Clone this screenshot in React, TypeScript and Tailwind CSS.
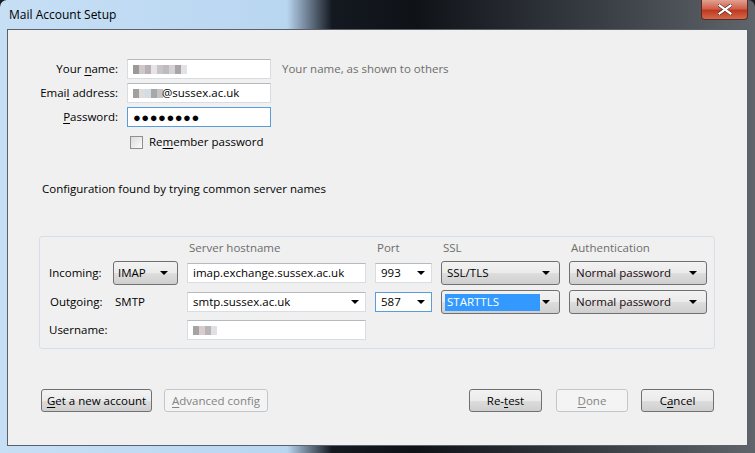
import React from "react";

const font = { fontFamily: '"Segoe UI", "Open Sans", "Noto Sans", sans-serif' };

const Arrow = () => (
  <svg width="8" height="4" viewBox="0 0 8 4" className="shrink-0">
    <path d="M0 0h8L4 4z" fill="#000" />
  </svg>
);

const Blur = ({ cells }: { cells: string[] }) => (
  <div className="flex h-[9px]">
    {cells.map((c, i) => (
      <div key={i} className="h-full w-[6px]" style={{ background: c }} />
    ))}
  </div>
);

const U = ({ children }: { children: React.ReactNode }) => <span className="underline underline-offset-2">{children}</span>;

const TextBox = ({ children, focus, w, combo }: { children?: React.ReactNode; focus?: boolean; w: string; combo?: boolean }) => (
  <div
    className={`flex h-[20px] items-center bg-white pl-[5px] pr-[6px] ${w} border ${
      focus ? "border-[#5a9ddb]" : "border-[#d9dde3] border-t-[#b5b9c0]"
    }`}
  >
    <div className="flex flex-1 items-center">{children}</div>
    {combo && <Arrow />}
  </div>
);

const Select = ({ children, w }: { children: React.ReactNode; w: string }) => (
  <div
    className={`flex h-[24px] items-center justify-between rounded-[3px] border border-[#707070] bg-[linear-gradient(#f2f2f2_0%,#ebebeb_50%,#dddddd_51%,#cfcfcf_100%)] pl-[3px] pr-[9px] ${w}`}
  >
    {children}
    <Arrow />
  </div>
);

const Button = ({ children, w, disabled }: { children: React.ReactNode; w: string; disabled?: boolean }) => (
  <div
    className={`flex h-[23px] items-center justify-center rounded-[3px] border ${w} ${
      disabled
        ? "border-[#c3c7ca] bg-[#f4f4f4] text-[#838383]"
        : "border-[#707070] bg-[linear-gradient(#f2f2f2_0%,#ebebeb_50%,#dddddd_51%,#cfcfcf_100%)] text-black"
    }`}
  >
    {children}
  </div>
);

export default function App() {
  return (
    <div className="h-[453px] w-[755px] bg-[#1a1c20] text-[11.5px] leading-[16px] text-black" style={font}>
      <div className="flex h-full w-full flex-col rounded-t-[7px] bg-[linear-gradient(90deg,#c6dff5_0%,#b9d6f1_38%,#141820_44%,#0f1318_55%,#3a3f46_80%,#60656c_100%)]">
        {/* title bar */}
        <div className="flex h-[29px] items-start justify-between">
          <div className="pl-[9px] pt-[7px] text-[12px] text-black">Mail Account Setup</div>
          <div className="mr-[7px] flex h-[20px] w-[47px] items-center justify-center rounded-b-[4px] border border-t-0 border-[#5b2a24] bg-[linear-gradient(#e2a191_0%,#d1604c_45%,#c0391f_55%,#d06a4c_100%)]">
            <svg width="14" height="11" viewBox="0 0 14 11">
              <path d="M1.5 1.5l11 8M12.5 1.5l-11 8" stroke="#3b1a14" strokeWidth="3.4" strokeLinecap="square" />
              <path d="M1.5 1.5l11 8M12.5 1.5l-11 8" stroke="#fff" strokeWidth="2.2" strokeLinecap="square" />
            </svg>
          </div>
        </div>

        {/* client area */}
        <div className="mx-[7px] mb-[7px] flex flex-1 flex-col border border-[#5a616b] bg-[#f0f0f0]">
          {/* form */}
          <div className="flex flex-col gap-[4px] pt-[29px]">
            <div className="flex items-center">
              <div className="w-[110px] text-right">
                Your <U>n</U>ame:
              </div>
              <div className="ml-[9px]">
                <TextBox w="w-[144px]">
                  <Blur cells={["#9a9a9a", "#d0c8c8", "#b8b0b4", "#e4e4ea", "#c8c4c8", "#bcbcbc", "#d4d0d4", "#a8a4a8", "#e2e2e2"]} />
                </TextBox>
              </div>
              <div className="ml-[11px] text-[#6d6d6d]">Your name, as shown to others</div>
            </div>
            <div className="flex items-center">
              <div className="w-[110px] text-right">
                Emai<U>l</U> address:
              </div>
              <div className="ml-[9px]">
                <TextBox w="w-[144px]">
                  <Blur cells={["#a0a0a0", "#e0dcdc", "#d4dce6", "#a8a8a8", "#c4c4c4"]} />
                  <span className="ml-[-1px]">@sussex.ac.uk</span>
                </TextBox>
              </div>
            </div>
            <div className="flex items-center">
              <div className="w-[110px] text-right">
                <U>P</U>assword:
              </div>
              <div className="ml-[9px]">
                <TextBox w="w-[144px]" focus>
                  <span className="text-[13px] tracking-[0.5px]">●●●●●●●●</span>
                </TextBox>
              </div>
            </div>
            <div className="mt-[3px] flex items-center pl-[122px]">
              <div className="h-[13px] w-[13px] border border-[#8f8f8f] bg-[linear-gradient(135deg,#dcdcdc,#fbfbfb)]" />
              <div className="ml-[6px]">
                Re<U>m</U>ember password
              </div>
            </div>
          </div>

          <div className="mt-[31px] pl-[34px]">Configuration found by trying common server names</div>

          {/* server settings group */}
          <div className="ml-[31px] mt-[39px] h-[113px] w-[676px] rounded-[3px] border border-[#d5dfe5] pl-[9px] pt-[3px]">
            <div className="grid grid-cols-[55px_65px_179px_57px_119px_138px] items-center gap-x-[9px]">
              <div />
              <div />
              <div className="pl-[2px] text-[#6d6d6d]">Server hostname</div>
              <div className="pl-[2px] text-[#6d6d6d]">Port</div>
              <div className="pl-[2px] text-[#6d6d6d]">SSL</div>
              <div className="pl-[2px] text-[#6d6d6d]">Authentication</div>
            </div>

            <div className="mt-[5px] grid h-[24px] grid-cols-[55px_65px_179px_57px_119px_138px] items-center gap-x-[9px]">
              <div>Incoming:</div>
              <Select w="w-full">
                <span className="pl-[1px]">IMAP</span>
              </Select>
              <TextBox w="w-full">imap.exchange.sussex.ac.uk</TextBox>
              <TextBox w="w-full" combo>
                993
              </TextBox>
              <Select w="w-full">
                <span className="pl-[2px]">SSL/TLS</span>
              </Select>
              <Select w="w-full">
                <span className="pl-[3px] text-[#1a0a0a]">Normal password</span>
              </Select>
            </div>

            <div className="mt-[5px] grid h-[24px] grid-cols-[55px_65px_179px_57px_119px_138px] items-center gap-x-[9px]">
              <div className="pl-[1px]">Outgoing:</div>
              <div className="pl-[2px]">SMTP</div>
              <TextBox w="w-full" combo>
                smtp.sussex.ac.uk
              </TextBox>
              <TextBox w="w-full" combo focus>
                587
              </TextBox>
              <Select w="w-full">
                <span className="flex h-[17px] w-[95px] items-center bg-[#3399ff] pl-[2px] text-white">STARTTLS</span>
              </Select>
              <Select w="w-full">
                <span className="pl-[3px] text-[#1a0a0a]">Normal password</span>
              </Select>
            </div>

            <div className="mt-[6px] grid h-[20px] grid-cols-[55px_65px_179px_57px_119px_138px] items-center gap-x-[9px]">
              <div>Username:</div>
              <div />
              <TextBox w="w-full">
                <Blur cells={["#a4a4a4", "#d8cccc", "#b8b4b8", "#e0e0e0"]} />
              </TextBox>
            </div>
          </div>

          {/* buttons */}
          <div className="mt-[40px] flex items-center px-[33px]">
            <Button w="w-[111px]">
              <span>
                <U>G</U>et a new account
              </span>
            </Button>
            <div className="ml-[12px]">
              <Button w="w-[104px]" disabled>
                <span>
                  <U>A</U>dvanced config
                </span>
              </Button>
            </div>
            <div className="flex-1" />
            <Button w="w-[73px]">
              <span>
                Re-<U>t</U>est
              </span>
            </Button>
            <div className="ml-[14px]">
              <Button w="w-[72px]" disabled>
                <span>
                  <U>D</U>one
                </span>
              </Button>
            </div>
            <div className="ml-[13px]">
              <Button w="w-[73px]">
                <span>
                  C<U>a</U>ncel
                </span>
              </Button>
            </div>
          </div>
        </div>
      </div>
    </div>
  );
}
